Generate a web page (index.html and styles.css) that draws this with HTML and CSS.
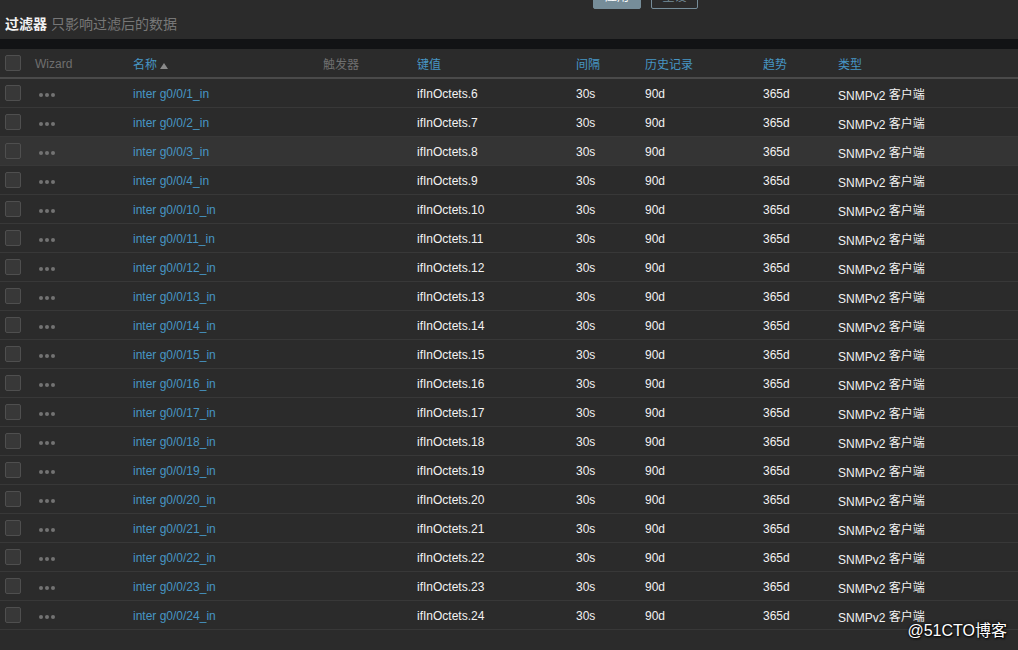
FILE: index.html
```html
<!DOCTYPE html>
<html lang="zh">
<head>
<meta charset="utf-8">
<title>监控项</title>
<link rel="stylesheet" href="styles.css">
</head>
<body>
<div class="page">
  <div class="filter">
    <div class="filter-btns">
      <button class="btn btn-primary">应用</button>
      <button class="btn btn-alt">重设</button>
    </div>
    <div class="filter-title"><span class="ft-main">过滤器</span> <span class="ft-sub">只影响过滤后的数据</span></div>
  </div>
  <div class="band"></div>
  <table class="list">
    <colgroup>
      <col class="c-chk"><col class="c-wiz"><col class="c-name"><col class="c-trig"><col class="c-key"><col class="c-int"><col class="c-hist"><col class="c-trend"><col class="c-type">
    </colgroup>
    <thead>
      <tr>
        <th><span class="chk"></span></th>
        <th class="muted latin">Wizard</th>
        <th class="link">名称<span class="arrow"></span></th>
        <th class="muted">触发器</th>
        <th class="link">键值</th>
        <th class="link">间隔</th>
        <th class="link">历史记录</th>
        <th class="link">趋势</th>
        <th class="link">类型</th>
      </tr>
    </thead>
    <tbody>
      <tr><td><span class="chk"></span></td><td><span class="dots"><i></i><i></i><i></i></span></td><td class="link">inter g0/0/1_in</td><td></td><td>ifInOctets.6</td><td>30s</td><td>90d</td><td>365d</td><td>SNMPv2 <span class="cjk">客户端</span></td></tr>
      <tr><td><span class="chk"></span></td><td><span class="dots"><i></i><i></i><i></i></span></td><td class="link">inter g0/0/2_in</td><td></td><td>ifInOctets.7</td><td>30s</td><td>90d</td><td>365d</td><td>SNMPv2 <span class="cjk">客户端</span></td></tr>
      <tr class="hover"><td><span class="chk"></span></td><td><span class="dots"><i></i><i></i><i></i></span></td><td class="link">inter g0/0/3_in</td><td></td><td>ifInOctets.8</td><td>30s</td><td>90d</td><td>365d</td><td>SNMPv2 <span class="cjk">客户端</span></td></tr>
      <tr><td><span class="chk"></span></td><td><span class="dots"><i></i><i></i><i></i></span></td><td class="link">inter g0/0/4_in</td><td></td><td>ifInOctets.9</td><td>30s</td><td>90d</td><td>365d</td><td>SNMPv2 <span class="cjk">客户端</span></td></tr>
      <tr><td><span class="chk"></span></td><td><span class="dots"><i></i><i></i><i></i></span></td><td class="link">inter g0/0/10_in</td><td></td><td>ifInOctets.10</td><td>30s</td><td>90d</td><td>365d</td><td>SNMPv2 <span class="cjk">客户端</span></td></tr>
      <tr><td><span class="chk"></span></td><td><span class="dots"><i></i><i></i><i></i></span></td><td class="link">inter g0/0/11_in</td><td></td><td>ifInOctets.11</td><td>30s</td><td>90d</td><td>365d</td><td>SNMPv2 <span class="cjk">客户端</span></td></tr>
      <tr><td><span class="chk"></span></td><td><span class="dots"><i></i><i></i><i></i></span></td><td class="link">inter g0/0/12_in</td><td></td><td>ifInOctets.12</td><td>30s</td><td>90d</td><td>365d</td><td>SNMPv2 <span class="cjk">客户端</span></td></tr>
      <tr><td><span class="chk"></span></td><td><span class="dots"><i></i><i></i><i></i></span></td><td class="link">inter g0/0/13_in</td><td></td><td>ifInOctets.13</td><td>30s</td><td>90d</td><td>365d</td><td>SNMPv2 <span class="cjk">客户端</span></td></tr>
      <tr><td><span class="chk"></span></td><td><span class="dots"><i></i><i></i><i></i></span></td><td class="link">inter g0/0/14_in</td><td></td><td>ifInOctets.14</td><td>30s</td><td>90d</td><td>365d</td><td>SNMPv2 <span class="cjk">客户端</span></td></tr>
      <tr><td><span class="chk"></span></td><td><span class="dots"><i></i><i></i><i></i></span></td><td class="link">inter g0/0/15_in</td><td></td><td>ifInOctets.15</td><td>30s</td><td>90d</td><td>365d</td><td>SNMPv2 <span class="cjk">客户端</span></td></tr>
      <tr><td><span class="chk"></span></td><td><span class="dots"><i></i><i></i><i></i></span></td><td class="link">inter g0/0/16_in</td><td></td><td>ifInOctets.16</td><td>30s</td><td>90d</td><td>365d</td><td>SNMPv2 <span class="cjk">客户端</span></td></tr>
      <tr><td><span class="chk"></span></td><td><span class="dots"><i></i><i></i><i></i></span></td><td class="link">inter g0/0/17_in</td><td></td><td>ifInOctets.17</td><td>30s</td><td>90d</td><td>365d</td><td>SNMPv2 <span class="cjk">客户端</span></td></tr>
      <tr><td><span class="chk"></span></td><td><span class="dots"><i></i><i></i><i></i></span></td><td class="link">inter g0/0/18_in</td><td></td><td>ifInOctets.18</td><td>30s</td><td>90d</td><td>365d</td><td>SNMPv2 <span class="cjk">客户端</span></td></tr>
      <tr><td><span class="chk"></span></td><td><span class="dots"><i></i><i></i><i></i></span></td><td class="link">inter g0/0/19_in</td><td></td><td>ifInOctets.19</td><td>30s</td><td>90d</td><td>365d</td><td>SNMPv2 <span class="cjk">客户端</span></td></tr>
      <tr><td><span class="chk"></span></td><td><span class="dots"><i></i><i></i><i></i></span></td><td class="link">inter g0/0/20_in</td><td></td><td>ifInOctets.20</td><td>30s</td><td>90d</td><td>365d</td><td>SNMPv2 <span class="cjk">客户端</span></td></tr>
      <tr><td><span class="chk"></span></td><td><span class="dots"><i></i><i></i><i></i></span></td><td class="link">inter g0/0/21_in</td><td></td><td>ifInOctets.21</td><td>30s</td><td>90d</td><td>365d</td><td>SNMPv2 <span class="cjk">客户端</span></td></tr>
      <tr><td><span class="chk"></span></td><td><span class="dots"><i></i><i></i><i></i></span></td><td class="link">inter g0/0/22_in</td><td></td><td>ifInOctets.22</td><td>30s</td><td>90d</td><td>365d</td><td>SNMPv2 <span class="cjk">客户端</span></td></tr>
      <tr><td><span class="chk"></span></td><td><span class="dots"><i></i><i></i><i></i></span></td><td class="link">inter g0/0/23_in</td><td></td><td>ifInOctets.23</td><td>30s</td><td>90d</td><td>365d</td><td>SNMPv2 <span class="cjk">客户端</span></td></tr>
      <tr><td><span class="chk"></span></td><td><span class="dots"><i></i><i></i><i></i></span></td><td class="link">inter g0/0/24_in</td><td></td><td>ifInOctets.24</td><td>30s</td><td>90d</td><td>365d</td><td>SNMPv2 <span class="cjk">客户端</span></td></tr>
    </tbody>
  </table>
  <div class="watermark">@51CTO博客</div>
</div>
</body>
</html>
```

FILE: styles.css
```css
html, body {
  margin: 0;
  padding: 0;
  background: #2b2b2b;
  height: 100%;
  overflow: hidden;
}
.page {
  position: relative;
  height: 650px;
  font-family: "Liberation Sans", Arial, "Noto Sans CJK SC", sans-serif;
  font-size: 12px;
  color: #f2f2f2;
}
.filter {
  height: 39px;
  overflow: hidden;
}
.filter-btns {
  display: flex;
  gap: 10px;
  margin-top: -15px;
  margin-left: 593px;
  height: 24px;
}
.btn {
  box-sizing: border-box;
  height: 24px;
  width: 48px;
  padding: 0;
  border-radius: 2px;
  font-family: inherit;
  font-size: 12px;
  line-height: 22px;
}
.btn-primary {
  background: #768d99;
  border: 1px solid #768d99;
  color: #ffffff;
}
.btn-alt {
  width: 47px;
  background: transparent;
  border: 1px solid #768d99;
  color: #768d99;
}
.filter-title {
  margin-top: 5px;
  margin-left: 5px;
  line-height: 20px;
  font-size: 14px;
}
.ft-main {
  color: #f2f2f2;
  font-weight: bold;
}
.ft-sub {
  color: #777777;
}
.band {
  height: 10px;
  background: #121315;
}
.list {
  width: 1018px;
  border-collapse: collapse;
  table-layout: fixed;
}
.c-chk { width: 30px; }
.c-wiz { width: 98px; }
.c-name { width: 190px; }
.c-trig { width: 94px; }
.c-key { width: 159px; }
.c-int { width: 69px; }
.c-hist { width: 118px; }
.c-trend { width: 75px; }
.c-type { width: 185px; }
.list th {
  height: 28px;
  padding: 0 0 0 5px;
  text-align: left;
  font-weight: normal;
  border-bottom: 2px solid #4a4a4a;
  vertical-align: middle;
  white-space: nowrap;
}
.list th.latin {
  height: 27px;
  padding-top: 1px;
}
.list td {
  height: 26px;
  padding: 2px 0 0 5px;
  border-bottom: 1px solid #383838;
  vertical-align: middle;
  white-space: nowrap;
}
.list td:first-child {
  padding-top: 0;
  height: 28px;
}
.list tr.hover td {
  background: #343434;
}
.cjk {
  vertical-align: 1px;
}
.muted {
  color: #6f6f6f;
}
.link {
  color: #4796c4;
}
.chk {
  display: block;
  box-sizing: border-box;
  width: 16px;
  height: 16px;
  border: 1px solid #4f4f4f;
  background: #383838;
  border-radius: 2px;
}
.arrow {
  display: inline-block;
  width: 0;
  height: 0;
  margin-left: 3px;
  border-left: 4px solid transparent;
  border-right: 4px solid transparent;
  border-bottom: 6px solid #8a8a8a;
  vertical-align: 0px;
}
.dots {
  display: flex;
  gap: 2px;
  margin-left: 4px;
  margin-top: 1px;
}
.dots i {
  display: block;
  width: 4px;
  height: 4px;
  border-radius: 50%;
  background: #737373;
}
.watermark {
  position: absolute;
  right: 11px;
  bottom: 9px;
  font-size: 16px;
  color: #ffffff;
  font-family: "Liberation Sans", Arial, "Noto Sans CJK SC", sans-serif;
  text-shadow: 1px 1px 2px #000, 0 0 3px #000;
}
```
